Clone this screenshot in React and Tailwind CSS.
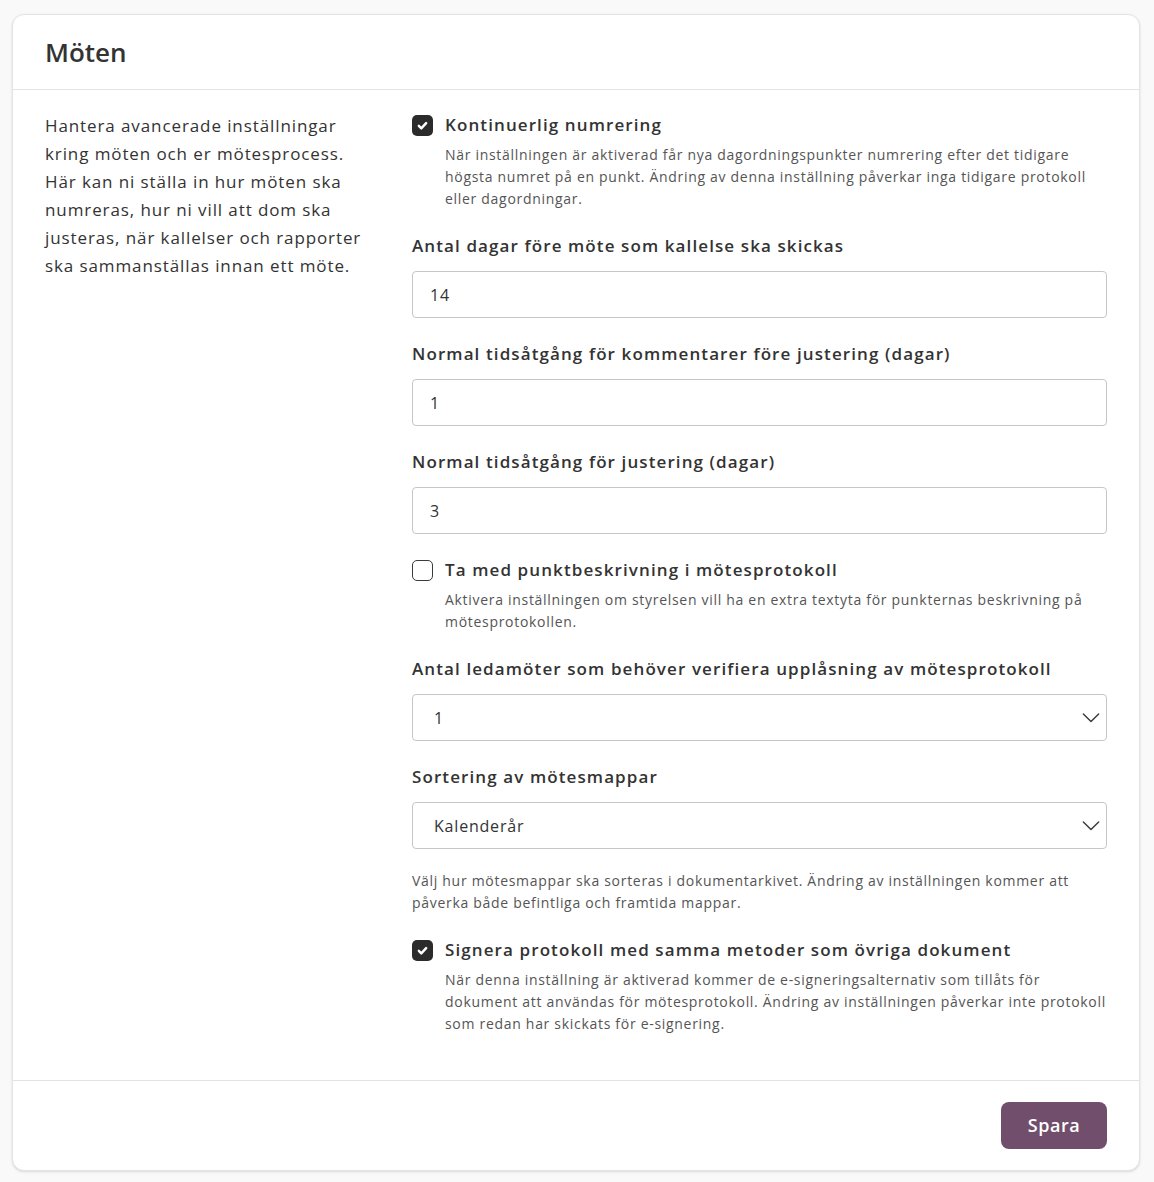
import { useState } from "react";

const font = { fontFamily: "'Open Sans', 'Noto Sans', sans-serif" };

function CheckIcon() {
  return (
    <svg viewBox="0 0 16 16" className="w-[13px] h-[13px]" fill="none" stroke="white" strokeWidth="3" strokeLinecap="round" strokeLinejoin="round">
      <path d="M3.5 8.5l3 3 6-6.5" />
    </svg>
  );
}

function Chevron() {
  return (
    <svg viewBox="0 0 20 12" className="w-[18px] h-[11px]" fill="none" stroke="#3a3a3a" strokeWidth="1.6" strokeLinecap="round" strokeLinejoin="round">
      <path d="M1.5 1.5l8.5 8.5 8.5-8.5" />
    </svg>
  );
}

function CheckboxSetting({ checked, onToggle, title, children }) {
  return (
    <div className="flex gap-3">
      <button
        onClick={onToggle}
        className={`mt-[2px] w-[21px] h-[21px] shrink-0 rounded-[5px] flex items-center justify-center ${
          checked ? "bg-[#2b2b2b]" : "bg-white border-[1.5px] border-[#3a3a3a]"
        }`}
      >
        {checked && <CheckIcon />}
      </button>
      <div>
        <p className="text-[17px] leading-6 font-semibold tracking-[1.1px] text-[#333]">{title}</p>
        <p className="mt-[7px] text-[14px] leading-[22px] tracking-[0.7px] text-[#555]">{children}</p>
      </div>
    </div>
  );
}

function TextField({ label, value, onChange }) {
  return (
    <div>
      <label className="block text-[17px] leading-6 font-semibold tracking-[1.1px] text-[#333] mb-[13px]">{label}</label>
      <input
        value={value}
        onChange={(e) => onChange(e.target.value)}
        className="w-full h-[47px] px-[17px] border border-[#c6c6c6] rounded-[4px] text-[16px] tracking-[0.8px] text-[#333] outline-none focus:border-[#714f6c]"
        style={font}
      />
    </div>
  );
}

function SelectField({ label, value, onChange, options }) {
  return (
    <div>
      <label className="block text-[17px] leading-6 font-semibold tracking-[1.1px] text-[#333] mb-[13px]">{label}</label>
      <div className="relative">
        <select
          value={value}
          onChange={(e) => onChange(e.target.value)}
          className="w-full h-[47px] pl-[21px] pr-10 border border-[#c6c6c6] rounded-[4px] text-[16px] tracking-[0.8px] text-[#333] bg-white appearance-none outline-none"
          style={font}
        >
          {options.map((o) => (
            <option key={o}>{o}</option>
          ))}
        </select>
        <span className="pointer-events-none absolute right-[7px] top-1/2 -translate-y-1/2 flex">
          <Chevron />
        </span>
      </div>
    </div>
  );
}

export default function App() {
  const [continuous, setContinuous] = useState(true);
  const [includeDesc, setIncludeDesc] = useState(false);
  const [sameSigning, setSameSigning] = useState(true);
  const [noticeDays, setNoticeDays] = useState("14");
  const [commentDays, setCommentDays] = useState("1");
  const [adjustDays, setAdjustDays] = useState("3");
  const [verifiers, setVerifiers] = useState("1");
  const [sorting, setSorting] = useState("Kalenderår");

  return (
    <div className="min-h-screen bg-[#f9f9f9] pl-3 pr-[14px] pt-[14px] pb-3" style={font}>
      <div className="bg-white border border-[#e3e3e3] rounded-xl shadow-sm">
        <div className="h-[75px] px-8 flex items-center border-b border-[#e3e3e3]">
          <h1 className="text-[26px] font-semibold text-[#333]">Möten</h1>
        </div>

        <div className="grid grid-cols-[320px_1fr] gap-[47px] px-8 pt-[22px] pb-[45px]">
          <p className="text-[17px] leading-7 tracking-[0.9px] text-[#333]">
            Hantera avancerade inställningar kring möten och er mötesprocess. Här kan ni ställa in hur möten ska
            numreras, hur ni vill att dom ska justeras, när kallelser och rapporter ska sammanställas innan ett möte.
          </p>

          <div className="flex flex-col gap-6 pt-[1px]">
            <CheckboxSetting checked={continuous} onToggle={() => setContinuous(!continuous)} title="Kontinuerlig numrering">
              När inställningen är aktiverad får nya dagordningspunkter numrering efter det tidigare högsta numret på en
              punkt. Ändring av denna inställning påverkar inga tidigare protokoll eller dagordningar.
            </CheckboxSetting>

            <TextField label="Antal dagar före möte som kallelse ska skickas" value={noticeDays} onChange={setNoticeDays} />
            <TextField
              label="Normal tidsåtgång för kommentarer före justering (dagar)"
              value={commentDays}
              onChange={setCommentDays}
            />
            <TextField label="Normal tidsåtgång för justering (dagar)" value={adjustDays} onChange={setAdjustDays} />

            <CheckboxSetting
              checked={includeDesc}
              onToggle={() => setIncludeDesc(!includeDesc)}
              title="Ta med punktbeskrivning i mötesprotokoll"
            >
              Aktivera inställningen om styrelsen vill ha en extra textyta för punkternas beskrivning på
              mötesprotokollen.
            </CheckboxSetting>

            <SelectField
              label="Antal ledamöter som behöver verifiera upplåsning av mötesprotokoll"
              value={verifiers}
              onChange={setVerifiers}
              options={["1", "2", "3"]}
            />

            <div>
              <SelectField
                label="Sortering av mötesmappar"
                value={sorting}
                onChange={setSorting}
                options={["Kalenderår", "Verksamhetsår"]}
              />
              <p className="mt-[21px] text-[14px] leading-[22px] tracking-[0.7px] text-[#555]">
                Välj hur mötesmappar ska sorteras i dokumentarkivet. Ändring av inställningen kommer att påverka både
                befintliga och framtida mappar.
              </p>
            </div>

            <CheckboxSetting
              checked={sameSigning}
              onToggle={() => setSameSigning(!sameSigning)}
              title="Signera protokoll med samma metoder som övriga dokument"
            >
              När denna inställning är aktiverad kommer de e-signeringsalternativ som tillåts för dokument att användas
              för mötesprotokoll. Ändring av inställningen påverkar inte protokoll som redan har skickats för
              e-signering.
            </CheckboxSetting>
          </div>
        </div>

        <div className="border-t border-[#e3e3e3] px-8 py-[21px] flex justify-end">
          <button className="h-[47px] w-[106px] rounded-lg bg-[#714f6c] text-white text-[18px] font-semibold tracking-[0.5px]">
            Spara
          </button>
        </div>
      </div>
    </div>
  );
}
